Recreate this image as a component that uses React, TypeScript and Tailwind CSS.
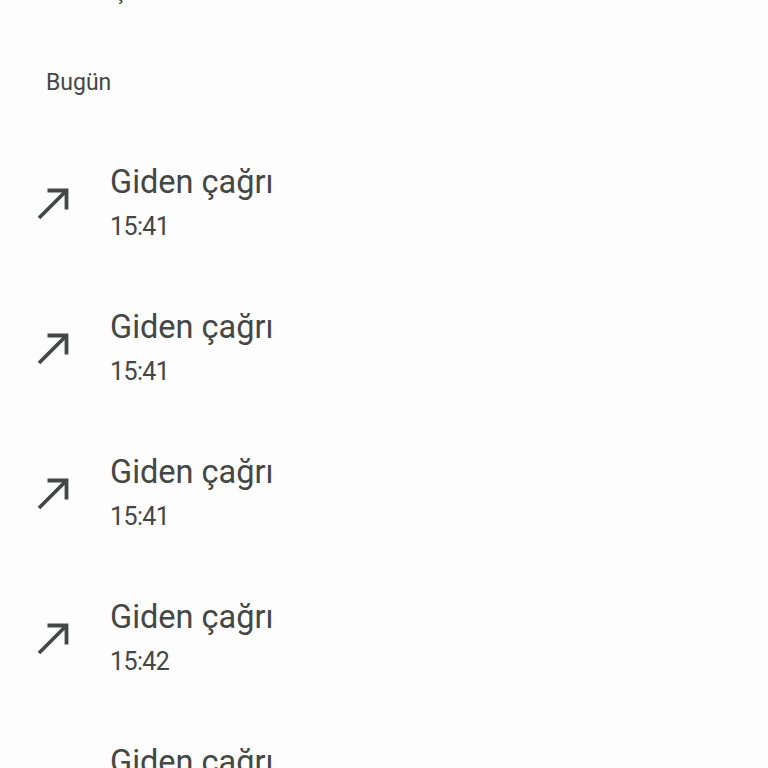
import React from 'react';

const calls = ['15:41', '15:41', '15:41', '15:42', '15:42'];

const CallMadeIcon: React.FC = () => (
  <svg viewBox="0 0 43 43" className="w-[43px] h-[43px] shrink-0" fill="none" stroke="#444746" strokeWidth="3.8">
    <path d="M7 37L34.5 9.5" />
    <path d="M15.5 9.5H34.5V28.5" />
  </svg>
);

const App: React.FC = () => {
  return (
    <div
      className="h-[768px] w-[768px] overflow-hidden bg-[#fcfdfc] text-[#444746]"
      style={{ fontFamily: 'Roboto, "Noto Sans", sans-serif' }}
    >
      <div className="h-[8px] overflow-hidden">
        <div className="pl-[114px] -mt-[22px] text-[22px] leading-[28px]">ş</div>
      </div>

      <div className="mt-[61px] pl-[46px] text-[23px] leading-[28px]">Bugün</div>

      <div className="mt-[33px]">
        {calls.map((time, i) => (
          <div key={i} className="h-[145px] flex items-center pl-[32px]">
            <CallMadeIcon />
            <div className="ml-[35px] flex flex-col">
              <span className="text-[32.5px] leading-[38px]">Giden çağrı</span>
              <span className="mt-[10px] text-[25px] leading-[32px] tracking-[-0.6px]">{time}</span>
            </div>
          </div>
        ))}
      </div>
    </div>
  );
};

export default App;
